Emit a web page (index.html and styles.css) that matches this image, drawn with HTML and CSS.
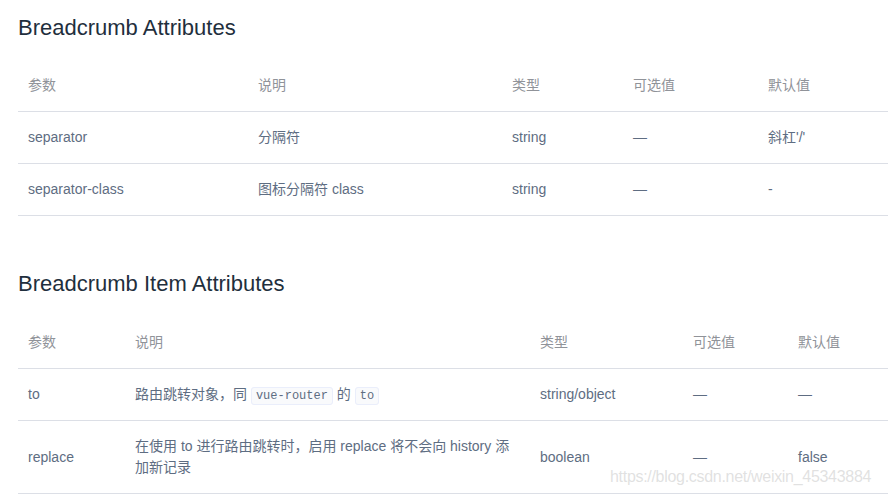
FILE: index.html
```html
<!DOCTYPE html>
<html lang="zh-CN">
<head>
<meta charset="utf-8">
<link rel="stylesheet" href="styles.css">
</head>
<body>
<div class="page">
  <h3 class="title">Breadcrumb Attributes</h3>
  <table class="attrs">
    <colgroup>
      <col class="a1"><col class="a2"><col class="a3"><col class="a4"><col class="a5">
    </colgroup>
    <thead>
      <tr><th>参数</th><th>说明</th><th>类型</th><th>可选值</th><th>默认值</th></tr>
    </thead>
    <tbody>
      <tr><td>separator</td><td>分隔符</td><td>string</td><td>—</td><td>斜杠'/'</td></tr>
      <tr><td>separator-class</td><td>图标分隔符 class</td><td>string</td><td>—</td><td>-</td></tr>
    </tbody>
  </table>

  <h3 class="title second">Breadcrumb Item Attributes</h3>
  <table class="attrs">
    <colgroup>
      <col class="b1"><col class="b2"><col class="b3"><col class="b4"><col class="b5">
    </colgroup>
    <thead>
      <tr><th>参数</th><th>说明</th><th>类型</th><th>可选值</th><th>默认值</th></tr>
    </thead>
    <tbody>
      <tr><td>to</td><td>路由跳转对象，同 <code>vue-router</code> 的 <code>to</code></td><td>string/object</td><td>—</td><td>—</td></tr>
      <tr><td>replace</td><td>在使用 to 进行路由跳转时，启用 replace 将不会向 history 添加新记录</td><td>boolean</td><td>—</td><td>false</td></tr>
    </tbody>
  </table>
</div>
<div class="watermark">https://blog.csdn.net/weixin_45343884</div>
</body>
</html>
```
FILE: styles.css
```css
html, body {
  margin: 0;
  padding: 0;
  background: #fff;
}
body {
  font-family: "Liberation Sans", Arial, "Noto Sans CJK SC", sans-serif;
  position: relative;
  width: 891px;
  height: 495px;
  overflow: hidden;
}
.page {
  padding: 11px 3px 0 18px;
}
.title {
  margin: 0 0 16px 0;
  font-size: 22px;
  line-height: 33px;
  font-weight: 400;
  color: #1f2f3d;
}
.title.second {
  margin-top: 51px;
  margin-bottom: 17px;
}
.attrs {
  width: 870px;
  border-collapse: collapse;
  table-layout: fixed;
  font-size: 14px;
  line-height: 21px;
}
.attrs th, .attrs td {
  padding: 15px 10px;
  text-align: left;
  vertical-align: middle;
  border-bottom: 1px solid #dcdfe6;
}
.attrs th {
  font-weight: 400;
  color: #909399;
}
.attrs td {
  color: #5e6d82;
}
.a1 { width: 230px; }
.a2 { width: 254px; }
.a3 { width: 121px; }
.a4 { width: 135px; }
.a5 { width: 130px; }
.b1 { width: 107px; }
.b2 { width: 405px; }
.b3 { width: 153px; }
.b4 { width: 105px; }
.b5 { width: 100px; }
code {
  font-family: "Liberation Mono", "Courier New", monospace;
  font-size: 12px;
  line-height: 1;
  color: #5e6d82;
  background: #f9fafc;
  border: 1px solid #eaeefb;
  border-radius: 3px;
  padding: 1px 4px;
}
.watermark {
  position: absolute;
  left: 610px;
  top: 467px;
  font-size: 16px;
  letter-spacing: -0.3px;
  line-height: 20px;
  color: rgba(200, 200, 200, 0.55);
  white-space: nowrap;
}
```
